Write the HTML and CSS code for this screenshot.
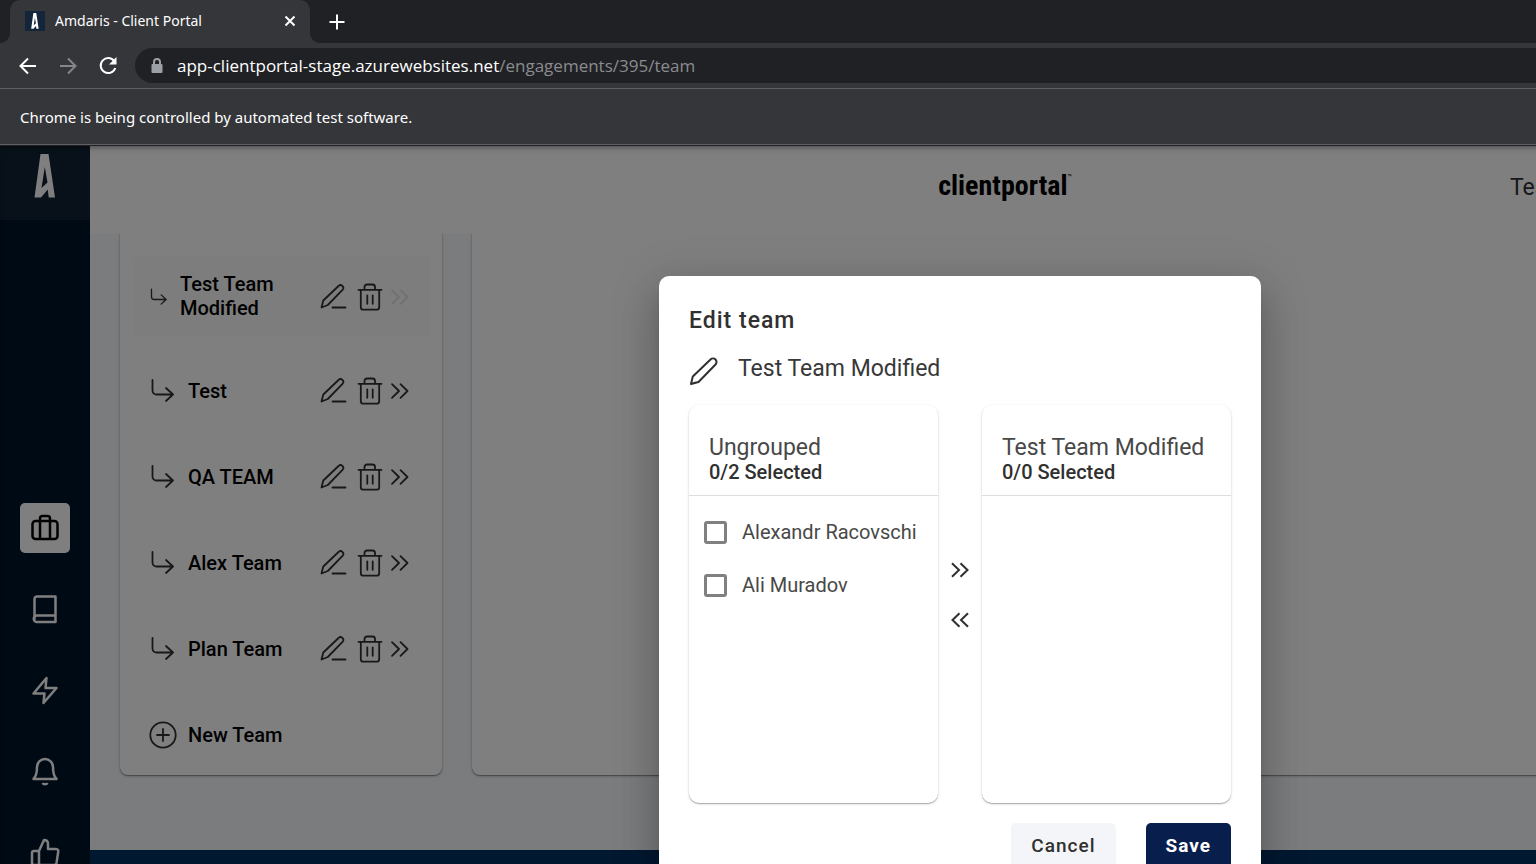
FILE: index.html
```html
<!DOCTYPE html>
<html lang="en">
<head>
<meta charset="utf-8">
<title>Amdaris - Client Portal</title>
<link rel="stylesheet" href="styles.css">
</head>
<body>
<svg class="sprite" aria-hidden="true">
  <symbol id="logo-a" viewBox="0 0 22 44"><path fill-rule="evenodd" d="M6.500 0h8L21 43.500h-6.300l-.9-8-6.800 8H.5zM10.800 13L7.500 34l6-5.500z"/></symbol>
  <symbol id="turn" viewBox="0 0 28 28"><path d="M3.500 3v10.500a4 4 0 0 0 4 4H24M17 11l7 6.500-7 6.500"/></symbol>
  <symbol id="edit" viewBox="0 0 28 28"><path d="M2.500 24.500l1.800-7L19.500 3a2.700 2.700 0 0 1 4 3.800L8.800 22zM13.500 24.500h13"/></symbol>
  <symbol id="trash" viewBox="0 0 28 28"><path d="M2.500 6.800h23M8.500 6.500V4A2.500 2.500 0 0 1 11 1.500h5.500A2.500 2.500 0 0 1 19 4v2.500M4.800 6.800V24.200a2.500 2.500 0 0 0 2.500 2.500h13.400a2.500 2.500 0 0 0 2.500-2.500V6.800M11.300 12.300v8.500M16.700 12.300v8.500"/></symbol>
  <symbol id="right" viewBox="0 0 20 20"><path d="M2 3.200L9 10l-7 6.800M10.500 3.200l7 6.800-7 6.800"/></symbol>
  <symbol id="left" viewBox="0 0 20 20"><path d="M18 3.200L11 10l7 6.800M9.500 3.200L2.500 10l7 6.800"/></symbol>
</svg>
<div class="window">
  <div class="tabs">
    <div class="tab">
      <span class="favicon"><svg viewBox="0 0 22 44"><use href="#logo-a"/></svg></span>
      <span class="tab-title">Amdaris - Client Portal</span>
      <button class="plain" aria-label="Close tab"><svg width="12" height="12" viewBox="0 0 12 12"><path d="M1.500 1.500l9 9m0-9l-9 9"/></svg></button>
    </div>
    <button class="plain new-tab" aria-label="New tab"><svg width="16" height="16" viewBox="0 0 16 16"><path d="M8 .5v15M.5 8h15"/></svg></button>
  </div>
  <div class="toolbar">
    <button class="plain" aria-label="Back"><svg width="20" height="20" viewBox="0 0 20 20"><path d="M18 10H3M10 2.500L2.500 10l7.500 7.500"/></svg></button>
    <button class="plain dim" aria-label="Forward"><svg width="20" height="20" viewBox="0 0 20 20"><path d="M2 10h15M10 2.500l7.500 7.500-7.500 7.500"/></svg></button>
    <button class="plain" aria-label="Reload"><svg width="20" height="20" viewBox="0 0 20 20"><path d="M16.500 5.500A7.500 7.500 0 1 0 17.300 12"/><path class="solid" d="M18.500 1v7.500H11z"/></svg></button>
    <div class="address">
      <svg class="lock" width="12" height="16" viewBox="0 0 12 16"><path class="solid" d="M1.500 6h9a1 1 0 0 1 1 1v7a1 1 0 0 1-1 1h-9a1 1 0 0 1-1-1V7a1 1 0 0 1 1-1z"/><path d="M3 6.500V4a3 3 0 0 1 6 0v2.500"/></svg>
      <span class="url">app-clientportal-stage.azurewebsites.net<span class="path">/engagements/395/team</span></span>
    </div>
  </div>
  <div class="infobar">Chrome is being controlled by automated test software.</div>

  <div class="app">
    <nav class="sidebar">
      <a class="brand" href="#" aria-label="Amdaris"><svg width="22" height="44"><use href="#logo-a"/></svg></a>
      <div class="nav">
        <a class="nav-item active" href="#" aria-label="Engagements"><svg width="30" height="30" viewBox="0 0 30 30"><rect x="2.500" y="8" width="25" height="18" rx="3"/><path d="M10 26V5.500A2.500 2.500 0 0 1 12.500 3h5A2.500 2.500 0 0 1 20 5.500V26"/></svg></a>
        <a class="nav-item" href="#" aria-label="Library"><svg width="30" height="30" viewBox="0 0 30 30"><path d="M4.500 25.500V5a2.500 2.500 0 0 1 2.500-2.500h18.500v25.500H7a3 3 0 0 1 0-6.500h18"/></svg></a>
        <a class="nav-item" href="#" aria-label="Activity"><svg width="30" height="30" viewBox="0 0 30 30"><path d="M16.500 3L3.500 18.500h11l-1 9.500L26.500 13h-11z"/></svg></a>
        <a class="nav-item" href="#" aria-label="Notifications"><svg width="30" height="30" viewBox="0 0 30 30"><path d="M3.500 23c3-3 3.500-6 3.500-12a8 8 0 0 1 16 0c0 6 .5 9 3.500 12zM12.500 27c1 1.800 4 1.800 5 0"/></svg></a>
        <a class="nav-item" href="#" aria-label="Feedback"><svg width="30" height="30" viewBox="0 0 30 30"><path d="M9 14l5-11c3 0 4 2 4 4v5h8c2 0 2.500 1.500 2.200 3L26.500 26c-.3 1.500-1 2-2.500 2H9zM9 14H4a2 2 0 0 0-2 2v10a2 2 0 0 0 2 2h5"/></svg></a>
      </div>
    </nav>
    <div class="page">
      <header class="header">
        <span></span>
        <span class="wordmark">clientportal<sup>™</sup></span>
        <span class="account">Test</span>
      </header>
      <main class="content">
        <ul class="card teams">
          <li class="team selected"><svg class="turn"><use href="#turn"/></svg><span class="name">Test Team Modified</span><button aria-label="Edit"><svg><use href="#edit"/></svg></button><button aria-label="Delete"><svg><use href="#trash"/></svg></button><button class="open" aria-label="Open" disabled><svg><use href="#right"/></svg></button></li>
          <li class="team"><svg class="turn"><use href="#turn"/></svg><span class="name">Test</span><button aria-label="Edit"><svg><use href="#edit"/></svg></button><button aria-label="Delete"><svg><use href="#trash"/></svg></button><button class="open" aria-label="Open"><svg><use href="#right"/></svg></button></li>
          <li class="team"><svg class="turn"><use href="#turn"/></svg><span class="name">QA TEAM</span><button aria-label="Edit"><svg><use href="#edit"/></svg></button><button aria-label="Delete"><svg><use href="#trash"/></svg></button><button class="open" aria-label="Open"><svg><use href="#right"/></svg></button></li>
          <li class="team"><svg class="turn"><use href="#turn"/></svg><span class="name">Alex Team</span><button aria-label="Edit"><svg><use href="#edit"/></svg></button><button aria-label="Delete"><svg><use href="#trash"/></svg></button><button class="open" aria-label="Open"><svg><use href="#right"/></svg></button></li>
          <li class="team"><svg class="turn"><use href="#turn"/></svg><span class="name">Plan Team</span><button aria-label="Edit"><svg><use href="#edit"/></svg></button><button aria-label="Delete"><svg><use href="#trash"/></svg></button><button class="open" aria-label="Open"><svg><use href="#right"/></svg></button></li>
          <li class="team"><button class="new-team"><svg viewBox="0 0 28 28"><circle cx="14" cy="14" r="12.700"/><path d="M14 8v12M8 14h12"/></svg><span class="name">New Team</span></button></li>
        </ul>
        <section class="card members"></section>
      </main>
      <footer class="footer"></footer>
    </div>

    <div class="overlay">
      <div class="dialog" role="dialog" aria-labelledby="dialog-title">
        <h2 id="dialog-title">Edit team</h2>
        <div class="rename">
          <label for="team-name" aria-label="Team name"><svg width="30" height="30" viewBox="0 0 30 30"><path d="M2 28l1.800-7.500L21.500 3.500a3.500 3.500 0 0 1 5 5L9.500 26zM2 28l5-1.500"/></svg></label>
          <input id="team-name" type="text" value="Test Team Modified">
        </div>
        <div class="transfer">
          <section class="panel">
            <div class="panel-head"><h3>Ungrouped</h3><p>0/2 Selected</p></div>
            <div class="options">
              <label><input type="checkbox"><span>Alexandr Racovschi</span></label>
              <label><input type="checkbox"><span>Ali Muradov</span></label>
            </div>
          </section>
          <div class="movers">
            <button aria-label="Move right"><svg><use href="#right"/></svg></button>
            <button aria-label="Move left"><svg><use href="#left"/></svg></button>
          </div>
          <section class="panel">
            <div class="panel-head"><h3>Test Team Modified</h3><p>0/0 Selected</p></div>
          </section>
        </div>
        <div class="actions">
          <button class="cancel">Cancel</button>
          <button class="save">Save</button>
        </div>
      </div>
    </div>
  </div>
</div>
</body>
</html>
```
FILE: styles.css
```css
* { box-sizing: border-box; }
body { margin: 0; overflow: hidden; font-family: Roboto, sans-serif; color: #303030; }
h2, h3, p, ul { margin: 0; padding: 0; }
button { padding: 0; border: 0; background: none; font: inherit; color: inherit; }
a { color: inherit; }
svg { display: block; fill: none; stroke: currentColor; stroke-width: 2; }
.sprite { display: none; }

/* The window runs past the right edge of the viewport */
.window { display: flex; flex-direction: column; width: 125%; height: 100vh; }

/* Browser frame */
.tabs, .toolbar, .infobar { flex: none; font-family: "Noto Sans", sans-serif; color: #fff; }
.tabs { display: flex; height: 43px; padding-left: 10px; background: #202124; }
.tab { position: relative; display: flex; align-items: center; gap: 10px; width: 300px; padding: 0 14px 2px 15px; border-radius: 10px 10px 0 0; background: #35363a; font-size: 14px; }
.tab::before, .tab::after { content: ""; position: absolute; bottom: 0; width: 10px; height: 10px; }
.tab::before { left: -10px; background: radial-gradient(circle at 0 0, #202124 10px, #35363a 10px); }
.tab::after { right: -10px; background: radial-gradient(circle at 100% 0, #202124 10px, #35363a 10px); }
.favicon { display: grid; place-items: center; width: 20px; height: 20px; background: #12253a; }
.favicon svg { width: 8px; height: 16px; fill: #fff; stroke: none; }
.tab-title { flex: 1; }
.plain { display: grid; place-items: center; }
.new-tab { margin-left: 19px; }
.plain .solid { fill: currentColor; stroke: none; }
.dim { color: #85868a; }
.toolbar { display: flex; align-items: center; gap: 20px; height: 45px; padding-left: 18px; background: #35363a; }
.address { display: flex; flex: 1; align-items: center; gap: 14px; height: 35px; margin: 0 130px 0 -3px; padding-left: 16px; border-radius: 18px; background: #202124; font-family: "Open Sans", sans-serif; font-size: 17px; }
.lock { color: #9aa0a6; }
.lock .solid { fill: currentColor; stroke: none; }
.path { color: #8b8c8f; }
.infobar { display: flex; align-items: center; height: 57px; padding-left: 20px; border-top: 1px solid #5f6064; border-bottom: 1px solid #5f6064; background: #35363a; font-size: 15px; }

/* Application */
.app { position: relative; display: flex; flex: 1; min-height: 0; overflow: hidden; border-top: 1px solid #202124; background: #f6f8fc; }
.sidebar { flex: none; width: 90px; background: #001428; color: #fff; }
.brand { display: grid; justify-content: center; height: 74px; padding-top: 8px; background: #102232; }
.brand svg { fill: #fff; stroke: none; }
.nav { display: flex; flex-direction: column; align-items: center; gap: 31px; padding-top: 283px; }
.nav-item { display: grid; place-items: center; width: 50px; height: 50px; border-radius: 5px; }
.nav-item svg { stroke-width: 2.5; stroke-linejoin: round; }
.active { background: #fff; color: #000; }
.page { display: flex; flex: 1; flex-direction: column; }
.header { display: grid; grid-template-columns: 1fr auto 1fr; align-items: center; height: 87px; padding-bottom: 4px; background: #fff; }
.wordmark { padding-bottom: 4px; font-family: "Roboto Condensed", "Liberation Sans Narrow", Roboto, sans-serif; font-size: 28px; font-weight: 700; line-height: 32px; color: #000; }
.wordmark sup { font-size: 8px; font-weight: 400; line-height: 8px; vertical-align: 15px; }
.account { justify-self: end; width: 410px; font-size: 23px; color: #303030; }
.content { display: flex; gap: 30px; height: 542px; padding: 0 30px; }
.card { border-radius: 0 0 8px 8px; background: #fff; box-shadow: 0 1px 1px rgba(0, 0, 0, .3), 0 1px 3px rgba(0, 0, 0, .25); clip-path: inset(0 -4px -4px -4px); }
.teams { display: flex; flex: none; flex-direction: column; gap: 24px; width: 322px; padding: 24px 12px 0 13px; list-style: none; }
.members { flex: 1; }
.team { display: flex; align-items: center; height: 62px; padding: 0 20px 0 16px; font-size: 20px; font-weight: 500; line-height: 24px; }
.team svg { width: 28px; height: 28px; stroke-width: 1.8; stroke-linecap: round; stroke-linejoin: round; }
.team.selected { height: 79px; background: #fafafa; }
.team .name { flex: 1; margin-left: 11px; padding-bottom: 1px; color: #000; }
.team button + button { margin-left: 9px; }
.team button.open { margin-left: 6px; }
.team .open svg { width: 20px; height: 20px; }
.team .open:disabled { color: #e0e0e0; }
.team.selected .turn { width: 20px; height: 20px; }
.new-team { display: flex; align-items: center; }
.footer { flex: 1; margin-top: 75px; background: #003060; }

/* Dialog */
.overlay { position: absolute; inset: 0; display: flex; align-items: flex-start; justify-content: center; padding-top: 130px; background: rgba(0, 0, 0, .5); box-shadow: inset 0 5px 5px -3px rgba(0, 0, 0, .35); }
.dialog { width: 602px; padding: 30px; border-radius: 10px; background: #fff; box-shadow: 0 11px 15px -7px rgba(0, 0, 0, .2), 0 24px 38px 3px rgba(0, 0, 0, .14), 0 9px 46px 8px rgba(0, 0, 0, .12); }
.dialog h2 { font-size: 23px; font-weight: 500; line-height: 30px; letter-spacing: 1px; }
.rename { display: flex; gap: 19px; align-items: center; height: 41px; margin: 14px 0; }
.rename input { flex: 1; height: 32px; padding: 0 0 4px; border: 0; outline: 0; background: none; font: 400 23px/28px Roboto, sans-serif; color: #383838; }
.rename svg { stroke-linejoin: round; }
.transfer { display: flex; }
.panel { flex: 1; height: 398px; border-radius: 10px; box-shadow: 0 1px 1px rgba(0, 0, 0, .25), 0 1px 3px rgba(0, 0, 0, .15); }
.panel-head { height: 91px; padding: 30px 20px 0; border-bottom: 1px solid #dedede; }
.panel h3 { font-size: 23px; font-weight: 400; line-height: 25px; color: #484848; }
.panel p { font-size: 20px; font-weight: 500; line-height: 24px; }
.options { display: flex; flex-direction: column; gap: 29px; padding: 24px 15px; }
.options label { display: flex; align-items: center; gap: 15px; font-size: 20px; line-height: 24px; color: #484848; white-space: nowrap; }
.options input { appearance: none; width: 23px; height: 23px; margin: 0; border: 3px solid #808080; border-radius: 3px; }
.movers { display: flex; flex-direction: column; align-items: center; gap: 30px; width: 44px; padding-top: 155px; }
.movers svg { width: 20px; height: 20px; }
.actions { display: flex; justify-content: flex-end; gap: 30px; padding-top: 20px; }
.actions button { height: 45px; padding: 0 20px; border-radius: 5px; font-size: 19px; font-weight: 500; letter-spacing: 1px; }
.cancel { background: #f4f5f8; }
.actions .save { background: #081f4d; color: #fff; font-weight: 700; }
```
